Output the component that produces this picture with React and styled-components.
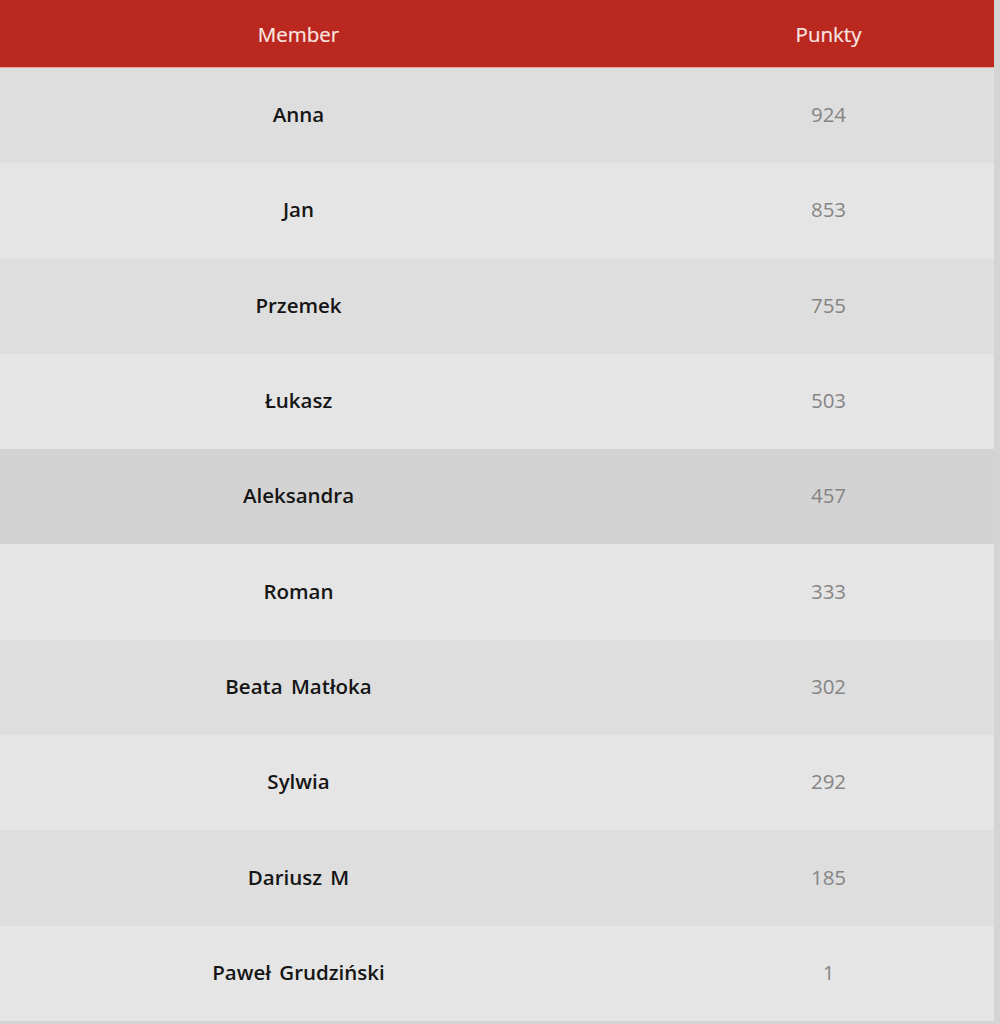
import React from 'react';
import styled, { createGlobalStyle } from 'styled-components';

const GlobalStyle = createGlobalStyle`
  html, body {
    margin: 0;
    padding: 0;
    background: #d4d4d4;
  }
  body {
    font-family: 'Open Sans', 'Noto Sans', sans-serif;
  }
`;

const Page = styled.div`
  width: 1000px;
  height: 1024px;
  background: #d4d4d4;
  overflow: hidden;
`;

const Table = styled.div`
  width: 994px;
  display: flex;
  flex-direction: column;
`;

const Row = styled.div`
  display: grid;
  grid-template-columns: 597px 66px 1fr;
  align-items: center;
  height: ${({ header }) => (header ? '68px' : '95.3px')};
  padding: ${({ header }) => (header ? '1px 0 0' : '0 0 3px')};
  background: ${({ header, shade }) =>
    header ? '#bb2820' : shade === 'hover' ? '#d3d3d3' : shade === 'odd' ? '#dedede' : '#e5e5e5'};
  border-bottom: ${({ header }) => (header ? '1px solid #e9a09a' : 'none')};
  box-sizing: border-box;
`;

const HeadCell = styled.div`
  grid-column: ${({ col }) => col || 1};
  text-align: center;
  font-size: 20.5px;
  font-weight: 400;
  color: #fae6e2;
  -webkit-text-stroke: 0.2px #fae6e2;
`;

const NameCell = styled.div`
  text-align: center;
  font-size: 20.5px;
  font-weight: 600;
  color: #151515;
  word-spacing: 3px;
`;

const PointsCell = styled.div`
  grid-column: 3;
  text-align: center;
  font-size: 20.5px;
  font-weight: 400;
  color: #858585;
`;

const members = [
  ['Anna', 924],
  ['Jan', 853],
  ['Przemek', 755],
  ['Łukasz', 503],
  ['Aleksandra', 457],
  ['Roman', 333],
  ['Beata Matłoka', 302],
  ['Sylwia', 292],
  ['Dariusz M', 185],
  ['Paweł Grudziński', 1],
];

export default function App() {
  return (
    <Page>
      <GlobalStyle />
      <Table>
        <Row header>
          <HeadCell>Member</HeadCell>
          <HeadCell col={3}>Punkty</HeadCell>
        </Row>
        {members.map(([name, pts], i) => (
          <Row key={name} shade={i === 4 ? 'hover' : i % 2 === 0 ? 'odd' : 'even'}>
            <NameCell>{name}</NameCell>
            <PointsCell>{pts}</PointsCell>
          </Row>
        ))}
      </Table>
    </Page>
  );
}
